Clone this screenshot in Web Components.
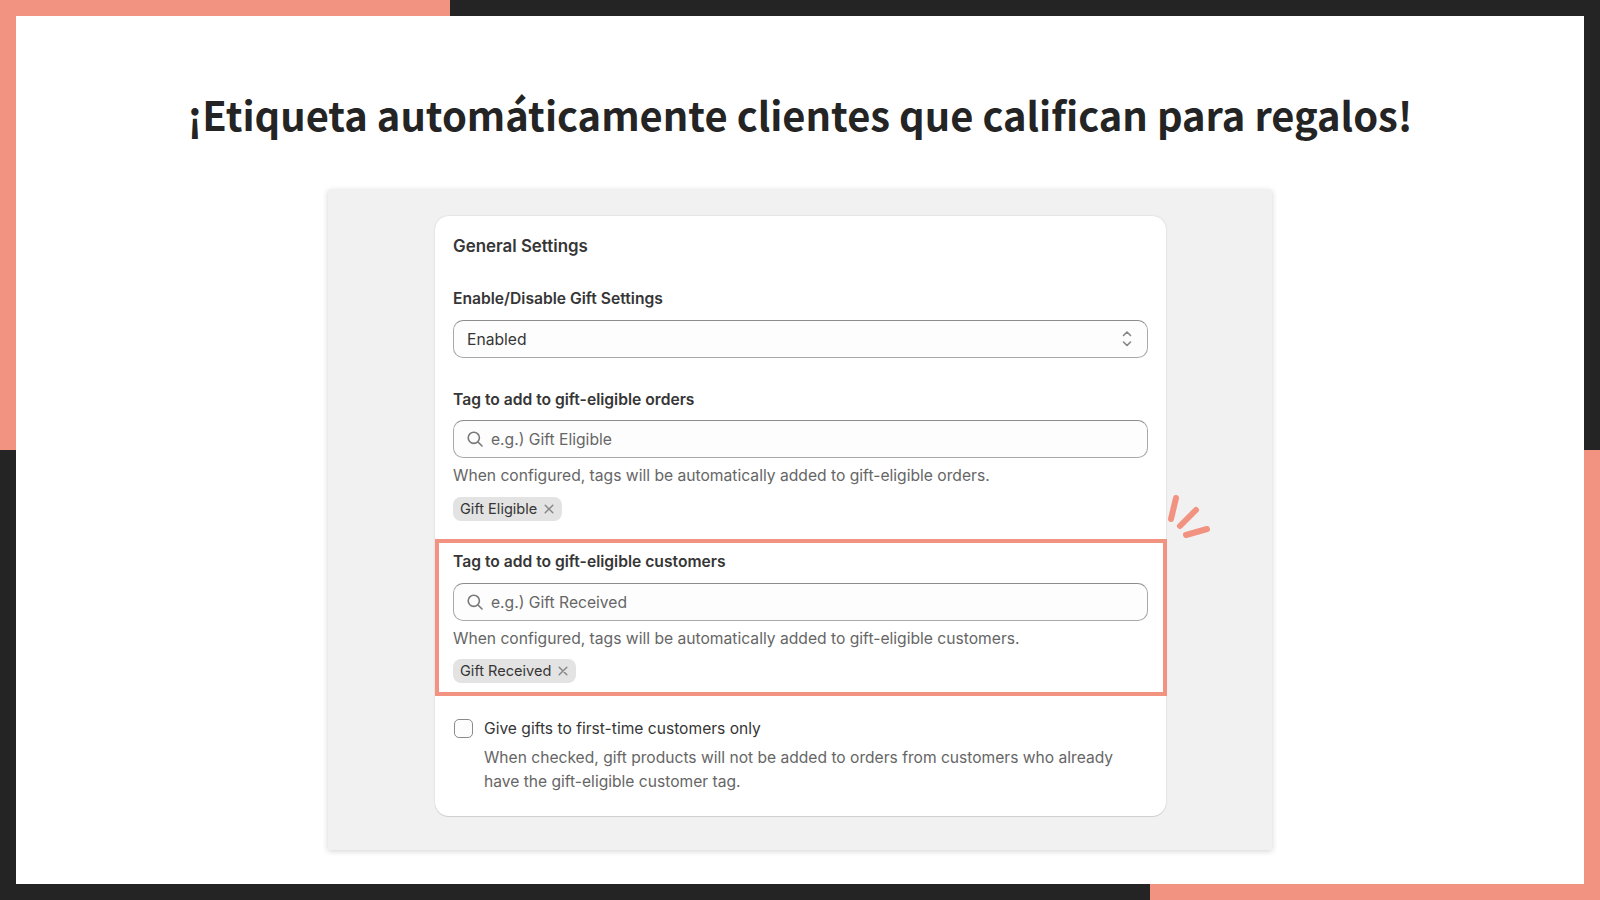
<!DOCTYPE html>
<html lang="es">
<head>
<meta charset="utf-8">
<title>Gift settings</title>
<style>
  html, body { margin: 0; padding: 0; }
</style>
</head>
<body>

<promo-frame heading="¡Etiqueta automáticamente clientes que califican para regalos!">
  <settings-card>
    <h-title slot="title">General Settings</h-title>

    <select-field label="Enable/Disable Gift Settings" value="Enabled"></select-field>

    <tag-field label="Tag to add to gift-eligible orders"
      placeholder="e.g.) Gift Eligible"
      help="When configured, tags will be automatically added to gift-eligible orders."
      tag="Gift Eligible"></tag-field>

    <tag-field highlighted label="Tag to add to gift-eligible customers"
      placeholder="e.g.) Gift Received"
      help="When configured, tags will be automatically added to gift-eligible customers."
      tag="Gift Received"></tag-field>

    <check-field label="Give gifts to first-time customers only">When checked, gift products will not be added to orders from customers who already have the gift-eligible customer tag.</check-field>
  </settings-card>
</promo-frame>

<script>
const CORAL = "#f29382";
const DARK = "#242424";

class PromoFrame extends HTMLElement {
    constructor() {
        super();
        this.shadowDOM = this.attachShadow({mode: "open"});
    }

    connectedCallback() {
        this.shadowDOM.innerHTML = `
        <style>
        :host {
            display: block;
            width: 1600px;
            height: 900px;
            box-sizing: border-box;
            padding: 16px;
            overflow: hidden;
            background-color: ${DARK};
            background-image:
                linear-gradient(${CORAL}, ${CORAL}), linear-gradient(${CORAL}, ${CORAL}),
                linear-gradient(${CORAL}, ${CORAL}), linear-gradient(${CORAL}, ${CORAL});
            background-repeat: no-repeat;
            background-size: 450px 16px, 16px 450px, 450px 16px, 16px 450px;
            background-position: left top, left top, right bottom, right bottom;
        }
        .sheet {
            height: 100%;
            background: #fff;
            display: flex;
            flex-direction: column;
            align-items: center;
        }
        h1 {
            margin: 65px 0 0;
            height: 66px;
            font: 700 39.9px/66px "Noto Sans CJK JP", "Noto Sans", sans-serif;
            color: #242424;
            white-space: nowrap;
        }
        .panel {
            margin-top: 43px;
            box-sizing: border-box;
            width: 944px;
            height: 660px;
            padding: 26px 0 0 107px;
            background: #f1f1f1;
            box-shadow: 0 1px 6px rgba(0,0,0,.18);
        }
        </style>
        <div class="sheet">
            <h1>${this.getAttribute("heading")}</h1>
            <div class="panel"><slot></slot></div>
        </div>
        `;
    }
}

class SettingsCard extends HTMLElement {
    constructor() {
        super();
        this.shadowDOM = this.attachShadow({mode: "open"});
    }

    connectedCallback() {
        this.shadowDOM.innerHTML = `
        <style>
        :host {
            display: block;
            position: relative;
            box-sizing: border-box;
            width: 731px;
            height: 600px;
            background: #fff;
            border-radius: 14px;
            box-shadow: 0 1px 0 #d0d0d0, 0 0 2px rgba(0,0,0,.16);
            font-family: Inter, "Liberation Sans", sans-serif;
            color: #363636;
        }
        .title {
            padding: 20px 18px 0;
            height: 24px;
        }
        svg {
            position: absolute;
            left: 731px;
            top: 279px;
        }
        </style>
        <div class="title"><slot name="title"></slot></div>
        <slot></slot>
        <svg width="48" height="48" viewBox="0 0 48 48" fill="none" stroke="${CORAL}" stroke-width="6" stroke-linecap="round">
            <path d="M10 3 L5 24"/>
            <path d="M30 15 L14 31"/>
            <path d="M20 40 L41 34"/>
        </svg>
        `;
    }
}

class HTitle extends HTMLElement {
    constructor() {
        super();
        this.shadowDOM = this.attachShadow({mode: "open"});
    }

    connectedCallback() {
        this.shadowDOM.innerHTML = `
        <style>
        :host { display: block; font-size: 16.9px; line-height: 20px; font-weight: 600; }
        </style>
        <slot></slot>
        `;
    }
}

const FIELD_CSS = `
    .label { font-size: 15.65px; line-height: 20px; font-weight: 600; color: #363636; }
    .box {
        box-sizing: border-box;
        display: flex;
        align-items: center;
        height: 38px;
        margin-top: 11px;
        padding: 0 13px;
        background: #fdfdfd;
        border: 1px solid #a8a8a8;
        border-top-color: #8d8d8d;
        border-radius: 10px;
        font-size: 15.65px;
    }
`;

class SelectField extends HTMLElement {
    constructor() {
        super();
        this.shadowDOM = this.attachShadow({mode: "open"});
    }

    connectedCallback() {
        this.shadowDOM.innerHTML = `
        <style>
        :host { display: block; padding: 0 18px; height: 121px; box-sizing: border-box; padding-top: 29px; }
        ${FIELD_CSS}
        .box { justify-content: space-between; color: #363636; }
        </style>
        <div class="label">${this.getAttribute("label")}</div>
        <div class="box">
            <span>${this.getAttribute("value")}</span>
            <svg width="14" height="20" viewBox="0 0 14 20" fill="none" stroke="#858585" stroke-width="1.6" stroke-linecap="round" stroke-linejoin="round">
                <path d="M3.5 6.5 L7 3 L10.5 6.5"/>
                <path d="M3.5 13 L7 16.5 L10.5 13"/>
            </svg>
        </div>
        `;
    }
}

class TagField extends HTMLElement {
    constructor() {
        super();
        this.shadowDOM = this.attachShadow({mode: "open"});
    }

    connectedCallback() {
        const highlighted = this.hasAttribute("highlighted");
        this.shadowDOM.innerHTML = `
        <style>
        :host {
            display: block;
            box-sizing: border-box;
            padding: 9px 18px 0;
            height: ${highlighted ? 157 : 158}px;
        }
        :host([highlighted]) {
            width: 732px;
            border: 4px solid ${CORAL};
            padding: 9px 15px 0 14px;
        }
        ${FIELD_CSS}
        .box { color: #666; gap: 7px; margin-top: ${highlighted ? 11 : 10}px; }
        svg.search { flex: none; margin-left: -1px; }
        .help { margin-top: 8px; font-size: 15.65px; line-height: 20px; color: #666; }
        .tag {
            display: inline-flex;
            align-items: center;
            gap: 6px;
            height: 24px;
            margin-top: ${highlighted ? 10 : 11}px;
            padding: 0 7px;
            border-radius: 8px;
            background: #e3e3e3;
            color: #363636;
            font-size: 14.55px;
        }
        </style>
        <div class="label">${this.getAttribute("label")}</div>
        <div class="box">
            <svg class="search" width="18" height="18" viewBox="0 0 18 18" fill="none" stroke="#787878" stroke-width="1.6" stroke-linecap="round">
                <circle cx="7.8" cy="7.8" r="5.6"/>
                <path d="M12 12 L16 16"/>
            </svg>
            <span>${this.getAttribute("placeholder")}</span>
        </div>
        <div class="help">${this.getAttribute("help")}</div>
        <div class="tag">
            <span>${this.getAttribute("tag")}</span>
            <svg width="12" height="12" viewBox="0 0 12 12" fill="none" stroke="#858585" stroke-width="1.4" stroke-linecap="round">
                <path d="M2.2 2.2 L9.8 9.8 M9.8 2.2 L2.2 9.8"/>
            </svg>
        </div>
        `;
    }
}

class CheckField extends HTMLElement {
    constructor() {
        super();
        this.shadowDOM = this.attachShadow({mode: "open"});
    }

    connectedCallback() {
        this.shadowDOM.innerHTML = `
        <style>
        :host {
            display: grid;
            grid-template-columns: 19px 1fr;
            column-gap: 11px;
            padding: 23px 18px 0 19px;
        }
        .check {
            box-sizing: border-box;
            width: 19px;
            height: 19px;
            border: 1px solid #8a8a8a;
            border-radius: 5px;
            background: #fdfdfd;
        }
        .label { font-size: 15.6px; line-height: 20px; color: #363636; }
        .help { grid-column: 2; margin-top: 7px; font-size: 15.6px; line-height: 24px; color: #666; }
        </style>
        <div class="check"></div>
        <div class="label">${this.getAttribute("label")}</div>
        <div class="help"><slot></slot></div>
        `;
    }
}

customElements.define("promo-frame", PromoFrame);
customElements.define("settings-card", SettingsCard);
customElements.define("h-title", HTitle);
customElements.define("select-field", SelectField);
customElements.define("tag-field", TagField);
customElements.define("check-field", CheckField);
</script>
</body>
</html>
